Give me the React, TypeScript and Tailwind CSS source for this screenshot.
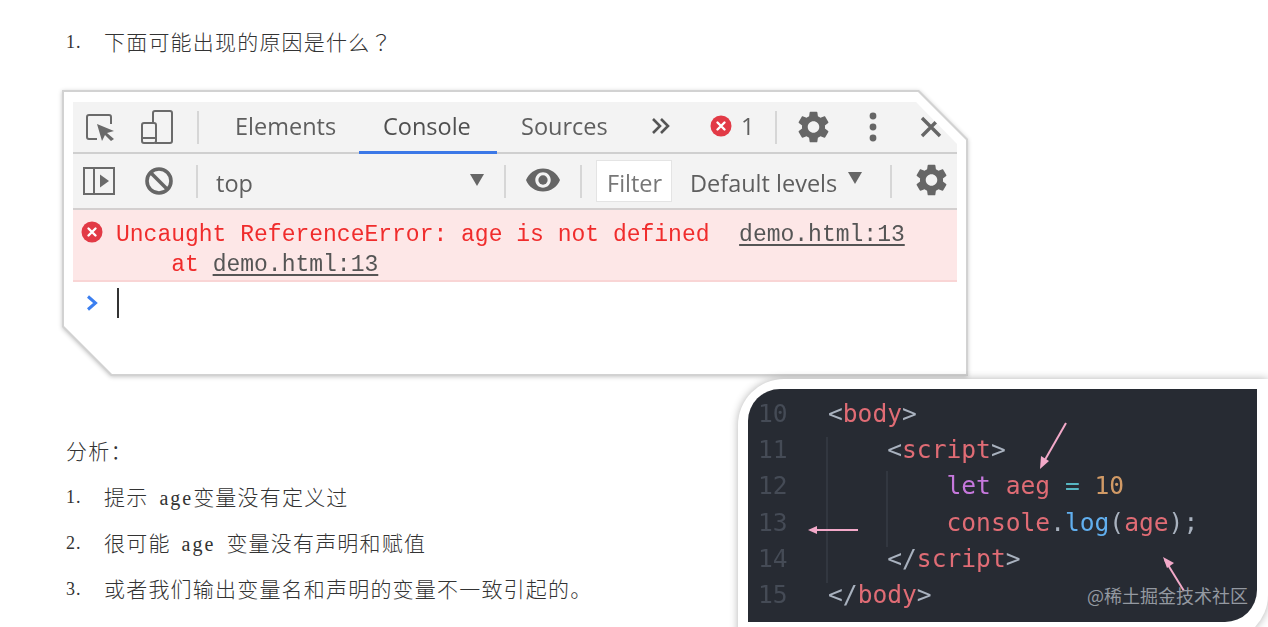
import React from "react";

const GEAR = "M19.14 12.94c.04-.3.06-.61.06-.94 0-.32-.02-.64-.07-.94l2.03-1.58c.18-.14.23-.41.12-.61l-1.92-3.32c-.12-.22-.37-.29-.59-.22l-2.39.96c-.5-.38-1.03-.7-1.62-.94l-.36-2.54c-.04-.24-.24-.41-.48-.41h-3.84c-.24 0-.43.17-.47.41l-.36 2.54c-.59.24-1.13.57-1.62.94l-2.39-.96c-.22-.08-.47 0-.59.22L2.74 8.87c-.12.21-.08.47.12.61l2.03 1.58c-.05.3-.09.63-.09.94s.02.64.07.94l-2.03 1.58c-.18.14-.23.41-.12.61l1.92 3.32c.12.22.37.29.59.22l2.39-.96c.5.38 1.03.7 1.62.94l.36 2.54c.05.24.24.41.48.41h3.84c.24 0 .44-.17.47-.41l.36-2.54c.59-.24 1.13-.56 1.62-.94l2.39.96c.22.08.47 0 .59-.22l1.92-3.32c.12-.22.07-.47-.12-.61l-2.01-1.58zM12 15.6c-1.98 0-3.6-1.62-3.6-3.6s1.62-3.6 3.6-3.6 3.6 1.62 3.6 3.6-1.62 3.6-3.6 3.6z";

const Gear = ({ className }: { className: string }) => (
  <svg viewBox="2.4 2 19.2 20" className={className} fill="#666">
    <path d={GEAR} />
  </svg>
);

const Divider = ({ className = "" }: { className?: string }) => <div className={`w-[2px] h-[33px] shrink-0 bg-[#d6d6d6] ${className}`} />;

const Tri = ({ className }: { className: string }) => (
  <svg viewBox="0 0 14 12" className={`w-[14px] h-[12px] shrink-0 ${className}`} fill="#666">
    <path d="M0 0H14L7 12Z" />
  </svg>
);

const ErrIcon = ({ className, fill }: { className: string; fill: string }) => (
  <svg viewBox="0 0 22 22" className={className}>
    <circle cx="11" cy="11" r="10.5" fill={fill} />
    <path d="M7.5 7.5L14.5 14.5M14.5 7.5L7.5 14.5" stroke="#fff" strokeWidth="2.4" strokeLinecap="round" />
  </svg>
);

function Q({ n, children }: { n: string; children: React.ReactNode }) {
  return (
    <div className="flex items-center h-[30px] text-[21px] tracking-[1.2px] text-[#333] font-['Noto_Sans_CJK_SC',sans-serif] font-light whitespace-pre">
      <span className="w-[38px] text-[18px] tracking-[1px] font-['Liberation_Serif',serif]">{n}</span>
      <span>{children}</span>
    </div>
  );
}

const Lat = ({ children }: { children: string }) => (
  <span className="font-['Liberation_Serif',serif] text-[20px] tracking-[2px]">{children}</span>
);
const Sp = () => <span className="inline-block w-[11px]" />;

function DevTools() {
  return (
    <div className="ml-[62px] mt-[33px] w-[906px] h-[286px] [filter:drop-shadow(0_1px_2px_rgba(0,0,0,0.22))]">
      <div className="w-full h-full p-[2px] bg-[#d2d2d2] [clip-path:polygon(0_0,857px_0,100%_49px,100%_100%,49px_100%,0_237px)]">
        <div className="w-full h-full pl-[9px] pr-[9px] pt-[10px] bg-white [clip-path:polygon(0_0,854px_0,100%_48px,100%_100%,48px_100%,0_234px)]">
          <div className="blur-[0.5px] [clip-path:polygon(0_0,843px_0,100%_42px,100%_100%,0_100%)] font-['Open_Sans',sans-serif] text-[#5e5e5e]">
            {/* top tabs */}
            <div className="relative flex items-center h-[52px] bg-[#f3f3f3] border-b-[2px] border-[#cfcfcf] text-[23.5px]">
              <svg viewBox="0 0 29 27" className="w-[29px] h-[27px] ml-[13px] shrink-0" fill="none">
                <path d="M11 25H3a2 2 0 0 1-2-2V3a2 2 0 0 1 2-2h20a2 2 0 0 1 2 2v7" stroke="#6a6a6a" strokeWidth="2" />
                <path d="M11 10l17 7-7 2 7 6-3 2-6-6-3 6z" fill="#6a6a6a" />
              </svg>
              <svg viewBox="0 0 32 34" className="w-[32px] h-[34px] ml-[26px] shrink-0" fill="none" stroke="#6a6a6a" strokeWidth="2">
                <path d="M12 13V3a2 2 0 0 1 2-2h15a2 2 0 0 1 2 2v28a2 2 0 0 1-2 2H14" />
                <rect x="1" y="13" width="14" height="20" rx="2" />
                <path d="M1 28H15" />
              </svg>
              <Divider className="ml-[24px]" />
              <span className="ml-[36px] w-[148px]">Elements</span>
              <span className="w-[138px] text-[#4f4f4f]">Console</span>
              <span className="w-[130px]">Sources</span>
              <svg viewBox="0 0 20 18" className="w-[20px] h-[18px] shrink-0 -mt-[3px]" fill="none" stroke="#555" strokeWidth="2.6">
                <path d="M2 2l7 7-7 7M10 2l7 7-7 7" />
              </svg>
              <ErrIcon className="w-[22px] h-[22px] ml-[39px] shrink-0 -mt-[2px]" fill="#e23a46" />
              <span className="ml-[9px] w-[15px]">1</span>
              <Divider className="ml-[19px]" />
              <Gear className="w-[31px] h-[32px] ml-[21px] shrink-0" />
              <svg viewBox="0 0 8 30" className="w-[8px] h-[30px] ml-[40px] shrink-0" fill="#666">
                <circle cx="4" cy="4" r="3.4" />
                <circle cx="4" cy="15" r="3.4" />
                <circle cx="4" cy="26" r="3.4" />
              </svg>
              <svg viewBox="0 0 22 22" className="w-[22px] h-[22px] ml-[43px] shrink-0" fill="none" stroke="#666" strokeWidth="3.4">
                <path d="M2 2l18 18M20 2L2 20" />
              </svg>
              <div className="absolute left-[286px] -bottom-[2px] w-[138px] h-[3px] bg-[#3b78e7]" />
            </div>
            {/* filter bar */}
            <div className="flex items-center h-[56px] bg-[#f3f3f3] border-b-[2px] border-[#d3cfcf] text-[23.5px]">
              <svg viewBox="0 0 32 28" className="w-[32px] h-[28px] ml-[10px] shrink-0" fill="none" stroke="#6a6a6a" strokeWidth="2">
                <rect x="1" y="1" width="30" height="26" />
                <path d="M11 1V27" />
                <path d="M17 7.5l9 6.5-9 6.5z" fill="#6a6a6a" stroke="none" />
              </svg>
              <svg viewBox="0 0 28 28" className="w-[28px] h-[28px] ml-[30px] shrink-0" fill="none" stroke="#666" strokeWidth="3.6">
                <circle cx="14" cy="14" r="12" />
                <path d="M5.5 5.5l17 17" />
              </svg>
              <Divider className="ml-[23px]" />
              <span className="ml-[18px] w-[254px] pt-[5px]">top</span>
              <Tri className="mr-[20px] -mt-[3px]" />
              <Divider />
              <svg viewBox="1 4.5 22 15" className="w-[34px] h-[24px] ml-[20px] shrink-0 -mt-[2px]" fill="#666">
                <path d="M12 4.5C7 4.5 2.73 7.61 1 12c1.73 4.39 6 7.5 11 7.5s9.27-3.11 11-7.5c-1.73-4.39-6-7.5-11-7.5z M12 17c-2.76 0-5-2.24-5-5s2.24-5 5-5 5 2.24 5 5-2.24 5-5 5z" fillRule="evenodd" />
                <circle cx="12" cy="12" r="3" />
              </svg>
              <Divider className="ml-[20px]" />
              <div className="ml-[14px] flex items-center w-[76px] h-[42px] pl-[10px] pt-[5px] bg-white border border-[#e4e4e4] text-[#777] shrink-0">Filter</div>
              <span className="ml-[18px] w-[158px] pt-[5px] shrink-0 whitespace-nowrap">Default levels</span>
              <Tri className="-mt-[6px]" />
              <Divider className="ml-[28px]" />
              <Gear className="w-[31px] h-[32px] ml-[24px] shrink-0 -mt-[3px]" />
            </div>
            {/* error */}
            <div className="relative h-[72px] pl-[43px] pt-[10px] bg-[#fde7e7] border-b-[2px] border-[#f9d5d5] font-['Liberation_Mono',monospace] text-[23px] leading-[30px] text-[#f02c2c] whitespace-pre">
              <ErrIcon className="absolute left-[8px] top-[11px] w-[22px] h-[22px]" fill="#e23a46" />
              <div>
                Uncaught ReferenceError: age is not defined
                <span>  </span>
                <span className="ml-[2px] text-[#555] underline underline-offset-[3px]">demo.html:13</span>
              </div>
              <div>
                {"    at "}
                <span className="text-[#555] underline underline-offset-[3px]">demo.html:13</span>
              </div>
            </div>
            {/* prompt */}
            <div className="flex items-center h-[42px] bg-white pl-[13px]">
              <svg viewBox="0 0 12 16" className="w-[12px] h-[16px] shrink-0" fill="none" stroke="#3b7ff0" strokeWidth="3">
                <path d="M2 1.5L9.5 8 2 14.5" />
              </svg>
              <div className="ml-[19px] w-[2px] h-[30px] bg-[#333]" />
            </div>
          </div>
        </div>
      </div>
    </div>
  );
}

const G = ({ children }: { children: React.ReactNode }) => <span className="text-[#a9b2bf]">{children}</span>;
const R = ({ children }: { children: React.ReactNode }) => <span className="text-[#e06c75]">{children}</span>;

function CodeCard() {
  const lines: [string, React.ReactNode][] = [
    ["10", <><G>{"<"}</G><R>body</R><G>{">"}</G></>],
    ["11", <>{"    "}<G>{"<"}</G><R>script</R><G>{">"}</G></>],
    ["12", <>{"        "}<span className="text-[#c678dd]">let</span> <R>aeg</R> <span className="text-[#56b6c2]">=</span> <span className="text-[#d19a66]">10</span></>],
    ["13", <>{"        "}<R>console</R><G>.</G><span className="text-[#61afef]">log</span><G>(</G><R>age</R><G>);</G></>],
    ["14", <>{"    "}<G>{"</"}</G><R>script</R><G>{">"}</G></>],
    ["15", <><G>{"</"}</G><R>body</R><G>{">"}</G></>],
  ];
  return (
    <div className="relative w-[530px] h-[262px] shrink-0 pl-[10px] pt-[10px] bg-white rounded-tl-[46px] rounded-br-[46px] shadow-[0_0_8px_rgba(0,0,0,0.3)]">
      <div className="w-[509px] h-[233px] pt-[7px] bg-[#272b33] rounded-tl-[32px] rounded-br-[32px] blur-[0.4px] font-['DejaVu_Sans_Mono',monospace] text-[24.6px] leading-[36.2px] whitespace-pre">
        {lines.map(([n, c]) => (
          <div key={n} className="flex pl-[10px] h-[36.2px]">
            <span className="w-[70px] text-[#454b56]">{n}</span>
            <span>{c}</span>
          </div>
        ))}
      </div>
      <svg viewBox="0 0 530 262" className="absolute inset-0 w-[530px] h-[262px] pointer-events-none" fill="none">
        <path d="M89 58V204" stroke="#373c46" strokeWidth="1.5" />
        <path d="M149 92V168" stroke="#373c46" strokeWidth="1.5" />
        <g stroke="#f3a9c9" strokeWidth="2">
          <path d="M328 44L304 86" />
          <path d="M120 151H72" />
          <path d="M446 212L427 181" />
        </g>
        <g fill="#f3a9c9">
          <path d="M302 90L303 77L311 82Z" />
          <path d="M70 151L79 147V155Z" />
          <path d="M425 178L436 184L429 189Z" />
        </g>
      </svg>
      <span className="absolute left-[349px] top-[203px] text-[18px] leading-[26px] text-[#9499a1] font-['Noto_Sans_CJK_SC',sans-serif] whitespace-nowrap">
        @稀土掘金技术社区
      </span>
    </div>
  );
}

export default function App() {
  return (
    <div className="w-[1268px] h-[627px] overflow-hidden bg-white">
      <div className="pt-[27px] pl-[66px]">
        <Q n="1.">下面可能出现的原因是什么<span className="font-['Noto_Sans_CJK_TC',sans-serif]">？</span></Q>
      </div>
      <DevTools />
      <div className="flex justify-between mt-[3px] pl-[66px]">
        <div className="pt-[57px] flex flex-col gap-[16px]">
          <div className="flex items-center h-[30px] text-[21px] tracking-[1.2px] text-[#333] font-['Noto_Sans_CJK_SC',sans-serif] font-light">分析：</div>
          <Q n="1.">提示<Sp /><Lat>age</Lat>变量没有定义过</Q>
          <Q n="2.">很可能<Sp /><Lat>age</Lat><Sp />变量没有声明和赋值</Q>
          <Q n="3.">或者我们输出变量名和声明的变量不一致引起的。</Q>
        </div>
        <CodeCard />
      </div>
    </div>
  );
}
